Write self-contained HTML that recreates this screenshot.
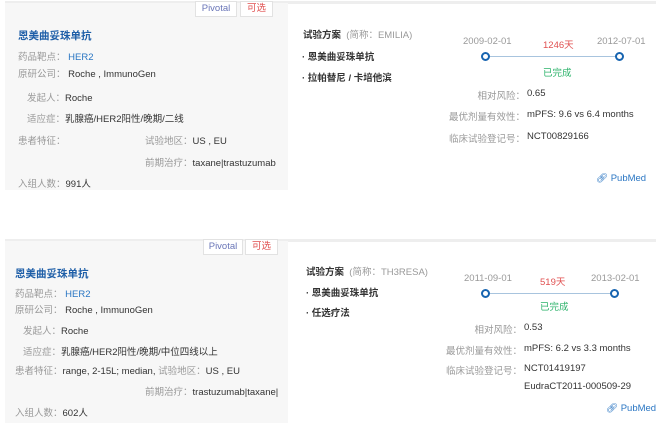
<!DOCTYPE html>
<html><head><meta charset="utf-8"><style>
body{margin:0;width:662px;height:435px;background:#fff;font-family:"Liberation Sans","Noto Sans CJK SC",sans-serif;position:relative;overflow:hidden;color:#333;font-size:9.5px}
.a{position:absolute;white-space:nowrap}
.panel{position:absolute;left:5px;width:283px;background:#f7f7f7}
.top{position:absolute;left:5px;width:651px;height:3px;background:#eee}
.g{color:#999}
.badge{position:absolute;height:14px;border:1px solid #e2e2e2;background:#fff;font-size:9.5px;line-height:14px;text-align:center}
.t{color:#1f5fa8;font-weight:bold;font-size:10.5px}
.b{color:#2a76c3}
.red{color:#e05050}
.green{color:#2db36b}
.r{text-align:right;width:120px}
.dot{position:absolute;width:5px;height:5px;border:2px solid #1764b0;border-radius:50%;background:#fff}
.line{position:absolute;height:1px;background:#a8c4de}
</style></head><body>

<!-- card 1 -->
<div class="top" style="top:1px"></div>
<div class="panel" style="top:3px;height:187px"></div>
<div class="badge" style="left:195px;top:1px;width:40px;color:#6a76b8">Pivotal</div>
<div class="badge" style="left:240px;top:1px;width:31px;color:#e05050">可选</div>
<div class="a t" style="left:18px;top:28px">恩美曲妥珠单抗</div>
<div class="a" style="left:18px;top:49px"><span class="g">药品靶点：</span> <span class="b">HER2</span></div>
<div class="a" style="left:18px;top:66px"><span class="g">原研公司：</span> Roche , ImmunoGen</div>
<div class="a" style="left:27px;top:90px"><span class="g">发起人：</span>Roche</div>
<div class="a" style="left:27px;top:111px"><span class="g">适应症：</span>乳腺癌/HER2阳性/晚期/二线</div>
<div class="a g" style="left:18px;top:133px">患者特征：</div>
<div class="a" style="left:145px;top:133px"><span class="g">试验地区：</span>US , EU</div>
<div class="a" style="left:145px;top:155px"><span class="g">前期治疗：</span>taxane|trastuzumab</div>
<div class="a" style="left:18px;top:176px"><span class="g">入组人数：</span>991人</div>

<div class="a" style="left:303px;top:27px"><b style="color:#333">试验方案</b> <span class="g">&nbsp;(简称：EMILIA)</span></div>
<div class="a" style="left:302px;top:49px;font-weight:bold">· 恩美曲妥珠单抗</div>
<div class="a" style="left:302px;top:70px;font-weight:bold">· 拉帕替尼 / 卡培他滨</div>
<div class="a g" style="left:463px;top:36px">2009-02-01</div>
<div class="a red" style="left:543px;top:37px">1246天</div>
<div class="a g" style="left:597px;top:36px">2012-07-01</div>
<div class="line" style="left:488px;top:56px;width:133px"></div>
<div class="dot" style="left:481px;top:52px"></div>
<div class="dot" style="left:615px;top:52px"></div>
<div class="a green" style="left:543px;top:65px">已完成</div>
<div class="a g r" style="left:405px;top:88px">相对风险：</div><div class="a" style="left:527px;top:88px">0.65</div>
<div class="a g r" style="left:405px;top:109px">最优剂量有效性：</div><div class="a" style="left:527px;top:109px">mPFS: 9.6 vs 6.4 months</div>
<div class="a g r" style="left:405px;top:131px">临床试验登记号：</div><div class="a" style="left:527px;top:131px">NCT00829166</div>
<div class="a b" style="left:596px;top:173px">&#x1F517;&#xFE0E; PubMed</div>

<!-- card 2 -->
<div class="top" style="top:239px"></div>
<div class="panel" style="top:241px;height:182px"></div>
<div class="badge" style="left:203px;top:239px;width:38px;color:#6a76b8">Pivotal</div>
<div class="badge" style="left:245px;top:239px;width:31px;color:#e05050">可选</div>
<div class="a t" style="left:15px;top:266px">恩美曲妥珠单抗</div>
<div class="a" style="left:15px;top:286px"><span class="g">药品靶点：</span> <span class="b">HER2</span></div>
<div class="a" style="left:15px;top:302px"><span class="g">原研公司：</span> Roche , ImmunoGen</div>
<div class="a" style="left:23px;top:323px"><span class="g">发起人：</span>Roche</div>
<div class="a" style="left:23px;top:344px"><span class="g">适应症：</span>乳腺癌/HER2阳性/晚期/中位四线以上</div>
<div class="a" style="left:15px;top:363px"><span class="g">患者特征：</span>range, 2-15L; median, <span class="g">试验地区：</span>US , EU</div>
<div class="a" style="left:145px;top:384px;width:133px;overflow:hidden"><span class="g">前期治疗：</span>trastuzumab|taxane|lapatinib</div>
<div class="a" style="left:15px;top:405px"><span class="g">入组人数：</span>602人</div>

<div class="a" style="left:306px;top:264px"><b>试验方案</b> <span class="g">&nbsp;(简称：TH3RESA)</span></div>
<div class="a" style="left:306px;top:285px;font-weight:bold">· 恩美曲妥珠单抗</div>
<div class="a" style="left:306px;top:305px;font-weight:bold">· 任选疗法</div>
<div class="a g" style="left:464px;top:273px">2011-09-01</div>
<div class="a red" style="left:540px;top:274px">519天</div>
<div class="a g" style="left:591px;top:273px">2013-02-01</div>
<div class="line" style="left:488px;top:293px;width:128px"></div>
<div class="dot" style="left:481px;top:289px"></div>
<div class="dot" style="left:610px;top:289px"></div>
<div class="a green" style="left:540px;top:299px">已完成</div>
<div class="a g r" style="left:402px;top:322px">相对风险：</div><div class="a" style="left:524px;top:322px">0.53</div>
<div class="a g r" style="left:402px;top:343px">最优剂量有效性：</div><div class="a" style="left:524px;top:343px">mPFS: 6.2 vs 3.3 months</div>
<div class="a g r" style="left:402px;top:363px">临床试验登记号：</div><div class="a" style="left:524px;top:363px">NCT01419197</div>
<div class="a" style="left:524px;top:381px">EudraCT2011-000509-29</div>
<div class="a b" style="left:606px;top:403px">&#x1F517;&#xFE0E; PubMed</div>
</body></html>
